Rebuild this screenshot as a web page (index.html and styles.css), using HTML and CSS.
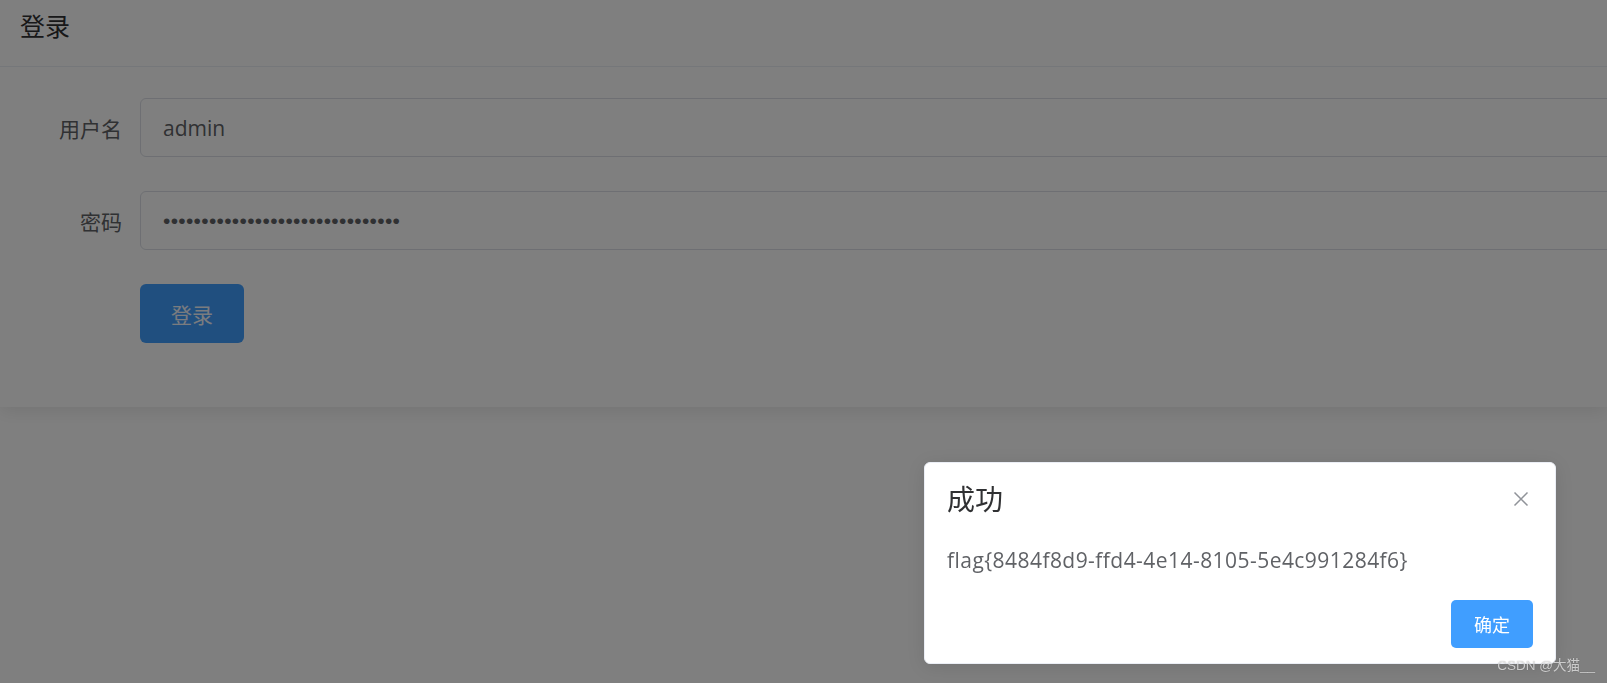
FILE: index.html
```html
<html>
<head>
  <title>登录</title>
  <link rel="stylesheet" href="styles.css">
</head>
<body>
  <!-- Login card -->
  <div class="card">
    <div class="card-header">
      <span class="card-title">登录</span>
    </div>
    <form class="login-form">
      <div class="form-item">
        <label class="form-label" for="username">用户名</label>
        <input class="form-input" type="text" id="username" value="admin">
      </div>
      <div class="form-item">
        <label class="form-label" for="password">密码</label>
        <input class="form-input" type="password" id="password" value="0123456789012345678901234567890">
      </div>
      <div class="form-item">
        <span class="form-label"></span>
        <button class="btn-primary" type="button">登录</button>
      </div>
    </form>
  </div>

  <!-- Modal mask and message box -->
  <div class="mask"></div>
  <div class="message-box">
    <div class="message-header">
      <span class="message-title">成功</span>
      <button class="message-close" type="button">
        <svg width="16" height="16" viewBox="0 0 16 16">
          <path d="M1.5 1.5 L14.5 14.5 M14.5 1.5 L1.5 14.5" stroke="#909399" stroke-width="1.5" fill="none"/>
        </svg>
      </button>
    </div>
    <div class="message-content">flag{8484f8d9-ffd4-4e14-8105-5e4c991284f6}</div>
    <div class="message-btns">
      <button class="btn-confirm" type="button">确定</button>
    </div>
  </div>

  <div class="watermark">CSDN @大猫__</div>
</body>
</html>
```

FILE: styles.css
```css
/* Page under the dialog */
html, body {
  overflow: hidden;
}
body {
  margin: 0;
  background-color: #ffffff;
  font-family: "Open Sans", "Noto Sans CJK SC", sans-serif;
  color: #606266;
}
.card {
  background-color: #ffffff;
  box-shadow: 0 3px 18px rgba(0, 0, 0, 0.1);
}
.card-header {
  height: 67px;
  border-bottom: 1px solid #ebeef5;
  padding: 8px 20px 0;
  box-sizing: border-box;
}
.card-title {
  font-size: 25px;
  line-height: 36px;
  color: #303133;
}
.login-form {
  padding: 31px 0 30px;
  margin: 0;
}
.form-item {
  display: flex;
  align-items: center;
  margin-bottom: 34px;
}
.form-label {
  width: 122px;
  flex-shrink: 0;
  padding-right: 18px;
  text-align: right;
  font-size: 21px;
  color: #606266;
}
.form-input {
  flex: 1;
  margin-right: -40px;
  height: 59px;
  padding: 0 22px;
  box-sizing: border-box;
  border: 1px solid #dcdfe6;
  border-radius: 6px;
  font-family: "Open Sans", "Noto Sans CJK SC", sans-serif;
  font-size: 21px;
  color: #606266;
  background-color: #ffffff;
  outline: none;
}
#password {
  font-family: "Liberation Sans", sans-serif;
  letter-spacing: 0.3px;
}
.btn-primary {
  width: 104px;
  height: 59px;
  border: none;
  border-radius: 6px;
  background-color: #409eff;
  color: #f4f8ff;
  font-family: "Noto Sans CJK SC", sans-serif;
  font-size: 21px;
}

/* Dialog */
.mask {
  position: fixed;
  top: 0;
  left: 0;
  right: 0;
  bottom: 0;
  background-color: rgba(0, 0, 0, 0.5);
}
.message-box {
  position: absolute;
  left: 924px;
  top: 462px;
  width: 632px;
  padding-bottom: 15px;
  background-color: #ffffff;
  border: 1px solid #ebeef5;
  border-radius: 6px;
  box-sizing: border-box;
  box-shadow: 0 3px 18px rgba(0, 0, 0, 0.1);
}
.message-header {
  display: flex;
  justify-content: space-between;
  align-items: center;
  padding: 22px 22px 15px;
}
.message-title {
  font-family: "Noto Sans CJK SC", sans-serif;
  font-size: 28px;
  line-height: 27px;
  color: #303133;
}
.message-close {
  border: none;
  background: none;
  padding: 0;
  width: 24px;
  height: 24px;
  display: flex;
  align-items: center;
  justify-content: center;
}
.message-content {
  padding: 15px 22px;
  font-size: 21px;
  line-height: 36px;
  letter-spacing: 0.45px;
  color: #606266;
}
.message-btns {
  display: flex;
  justify-content: flex-end;
  padding: 7px 22px 0;
}
.btn-confirm {
  width: 82px;
  height: 48px;
  border: none;
  border-radius: 5px;
  background-color: #409eff;
  color: #ffffff;
  font-family: "Noto Sans CJK SC", sans-serif;
  font-size: 18px;
}
.watermark {
  position: absolute;
  right: 12px;
  bottom: 9px;
  font-family: "Liberation Sans", "Noto Sans CJK SC", sans-serif;
  font-size: 13.5px;
  color: rgba(255, 255, 255, 0.7);
  text-shadow: 0 0 1px rgba(0, 0, 0, 0.4);
}
```
